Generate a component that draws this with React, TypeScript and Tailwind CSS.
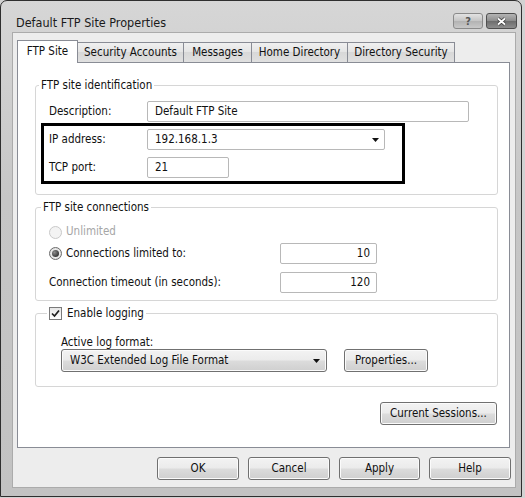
import type { ReactNode } from "react";

function Arrow() {
  return (
    <svg width="7" height="4" viewBox="0 0 7 4">
      <path d="M0 0h7L3.5 4z" fill="#111" />
    </svg>
  );
}

const face =
  "rounded-[3px] border border-[#707070] bg-[linear-gradient(to_bottom,#f3f3f3_0%,#ebebeb_48%,#dcdcdc_52%,#cfcfcf_100%)] text-[#111] shadow-[inset_0_0_0_1px_#fbfbfb]";

function Btn({ children, className = "" }: { children: ReactNode; className?: string }) {
  return <button className={`flex items-center justify-center ${face} ${className}`}>{children}</button>;
}

function Radio({ checked, disabled }: { checked?: boolean; disabled?: boolean }) {
  return (
    <span
      className={`flex h-[13px] w-[13px] items-center justify-center rounded-full border ${
        disabled
          ? "border-[#c9c9c9] bg-[#f3f3f3]"
          : "border-[#6b6b6b] bg-[radial-gradient(circle,#ffffff,#d4d4d4)]"
      }`}
    >
      {checked && (
        <span className="h-[7px] w-[7px] rounded-full bg-[radial-gradient(circle_at_35%_35%,#8c8c8c,#151515)]" />
      )}
    </span>
  );
}

function Checkbox() {
  return (
    <span className="flex h-[13px] w-[13px] items-center justify-center border border-[#7a7a7a] bg-[linear-gradient(to_bottom,#e6e6e6,#ffffff)]">
      <svg width="9" height="9" viewBox="0 0 9 9">
        <path d="M1 4.5 3.5 7 8 1.5" fill="none" stroke="#1e1e1e" strokeWidth="1.7" />
      </svg>
    </span>
  );
}

function Field({ children, className = "" }: { children?: ReactNode; className?: string }) {
  return (
    <div className={`flex h-[21px] items-center rounded-[2px] border border-[#b8b8b8] bg-white ${className}`}>
      {children}
    </div>
  );
}

const tabs = [
  { name: "Security Accounts", w: "w-[106px]" },
  { name: "Messages", w: "w-[68px]" },
  { name: "Home Directory", w: "w-[96px]" },
  { name: "Directory Security", w: "w-[107px]" },
];

export default function App() {
  return (
    <div className="h-[498px] w-[525px] bg-[#d2d2d2] font-['DejaVu_Sans_Condensed','Liberation_Sans',sans-serif] text-[11.5px] text-[#111]">
      <div className="flex h-[497px] w-[522px] flex-col rounded-t-[7px] border border-[#2e2e2e] bg-[linear-gradient(to_bottom,#d6d6d6,#c6c6c6_40%,#c2c2c2)]">
        {/* title bar */}
        <div className="flex h-[31px] items-start">
          <span className="ml-[15px] mt-[14px] text-[12.5px] leading-[15px] text-[#1a1a1a]">
            Default FTP Site Properties
          </span>
          <div className="ml-auto mr-[4px] mt-[12px] flex gap-[3px]">
            <div className="flex h-[16px] w-[30px] items-center justify-center rounded-[3px] border border-[#8a8a8a] bg-[linear-gradient(to_bottom,#e2e2e2,#c4c4c4_50%,#b2b2b2_50%,#c8c8c8)] text-[11px] font-bold leading-none text-[#555]">
              ?
            </div>
            <div className="flex h-[16px] w-[31px] items-center justify-center rounded-[3px] border border-[#4e4e4e] bg-[linear-gradient(to_bottom,#b4b4b4,#8c8c8c_50%,#6c6c6c_50%,#8e8e8e)]">
              <svg width="11" height="9" viewBox="0 0 11 9">
                <path d="M2 1.5 9 7.5M9 1.5 2 7.5" stroke="#3a3a3a" strokeWidth="3.4" />
                <path d="M2 1.5 9 7.5M9 1.5 2 7.5" stroke="#fff" strokeWidth="1.8" />
              </svg>
            </div>
          </div>
        </div>

        {/* client area */}
        <div className="ml-[11px] flex h-[456px] w-[504px] flex-col border border-[#ababab] bg-[#ededed]">
          <div className="relative z-10 -mb-px ml-[4px] mt-[7px] flex h-[23px] items-end">
            <div className="flex h-[23px] w-[61px] items-center justify-center border border-b-0 border-[#898c95] bg-white pb-[1px]">
              FTP Site
            </div>
            {tabs.map((t, i) => (
              <div
                key={t.name}
                className={`flex h-[21px] items-center justify-center border-y border-r border-[#898c95] bg-[linear-gradient(to_bottom,#f0f0f0,#e4e4e4_50%,#d8d8d8_50%,#e0e0e0)] ${t.w} ${
                  i === 0 ? "border-l-0" : ""
                }`}
              >
                {t.name}
              </div>
            ))}
          </div>

          {/* tab panel */}
          <div className="ml-[4px] flex h-[386px] w-[493px] flex-col border border-[#898c95] bg-white pl-[17px] pr-[11px] pt-[15px]">
            <fieldset className="rounded-[3px] border border-[#d6d6d6] pb-[16px]">
              <legend className="ml-[3px] px-[2px] leading-[14px]">FTP site identification</legend>
              <div className="relative flex flex-col gap-[7px] px-[13px] pt-[9px]">
                <div className="flex h-[21px] items-center">
                  <span className="w-[98px]">Description:</span>
                  <Field className="w-[322px] pl-[7px]">Default FTP Site</Field>
                </div>
                <div className="flex h-[21px] items-center">
                  <span className="w-[98px]">IP address:</span>
                  <Field className="w-[238px] justify-between pl-[7px] pr-[5px]">
                    <span>192.168.1.3</span>
                    <Arrow />
                  </Field>
                </div>
                <div className="flex h-[21px] items-center">
                  <span className="w-[98px]">TCP port:</span>
                  <Field className="w-[82px] pl-[7px]">21</Field>
                </div>
                <div className="pointer-events-none absolute left-[5px] top-[31px] h-[61px] w-[364px] border-[3px] border-black" />
              </div>
            </fieldset>

            <fieldset className="mt-[5px] rounded-[3px] border border-[#d6d6d6] pb-[7px]">
              <legend className="ml-[5px] px-[2px] leading-[14px]">FTP site connections</legend>
              <div className="flex flex-col px-[13px] pt-[10px]">
                <div className="flex h-[16px] items-center gap-[4px] text-[#a6a6a6]">
                  <Radio disabled />
                  Unlimited
                </div>
                <div className="mt-[3px] flex h-[21px] items-center">
                  <div className="flex w-[231px] items-center gap-[4px]">
                    <Radio checked />
                    Connections limited to:
                  </div>
                  <Field className="w-[97px] justify-end pr-[6px]">10</Field>
                </div>
                <div className="mt-[8px] flex h-[21px] items-center">
                  <span className="w-[231px]">Connection timeout (in seconds):</span>
                  <Field className="w-[97px] justify-end pr-[6px]">120</Field>
                </div>
              </div>
            </fieldset>

            <fieldset className="mt-[5px] rounded-[3px] border border-[#d6d6d6] pb-[14px]">
              <legend className="ml-[11px] px-[2px] leading-[14px]">
                <span className="inline-flex items-center gap-[5px] align-top">
                  <Checkbox />
                  Enable logging
                </span>
              </legend>
              <div className="flex flex-col px-[25px] pt-[15px]">
                <span className="h-[14px] leading-[14px]">Active log format:</span>
                <div className="flex items-center">
                  <div className={`flex h-[23px] w-[266px] items-center justify-between pl-[8px] pr-[6px] ${face}`}>
                    <span>W3C Extended Log File Format</span>
                    <Arrow />
                  </div>
                  <Btn className="ml-[17px] h-[23px] w-[84px]">Properties...</Btn>
                </div>
              </div>
            </fieldset>

            <div className="mr-[1px] mt-[15px] flex justify-end">
              <Btn className="h-[23px] w-[117px]">Current Sessions...</Btn>
            </div>
          </div>

          <div className="mr-[4px] mt-[9px] flex justify-end gap-[9px]">
            <Btn className="h-[23px] w-[82px]">OK</Btn>
            <Btn className="h-[23px] w-[82px]">Cancel</Btn>
            <Btn className="h-[23px] w-[81px]">Apply</Btn>
            <Btn className="h-[23px] w-[82px]">Help</Btn>
          </div>
        </div>
      </div>
    </div>
  );
}
